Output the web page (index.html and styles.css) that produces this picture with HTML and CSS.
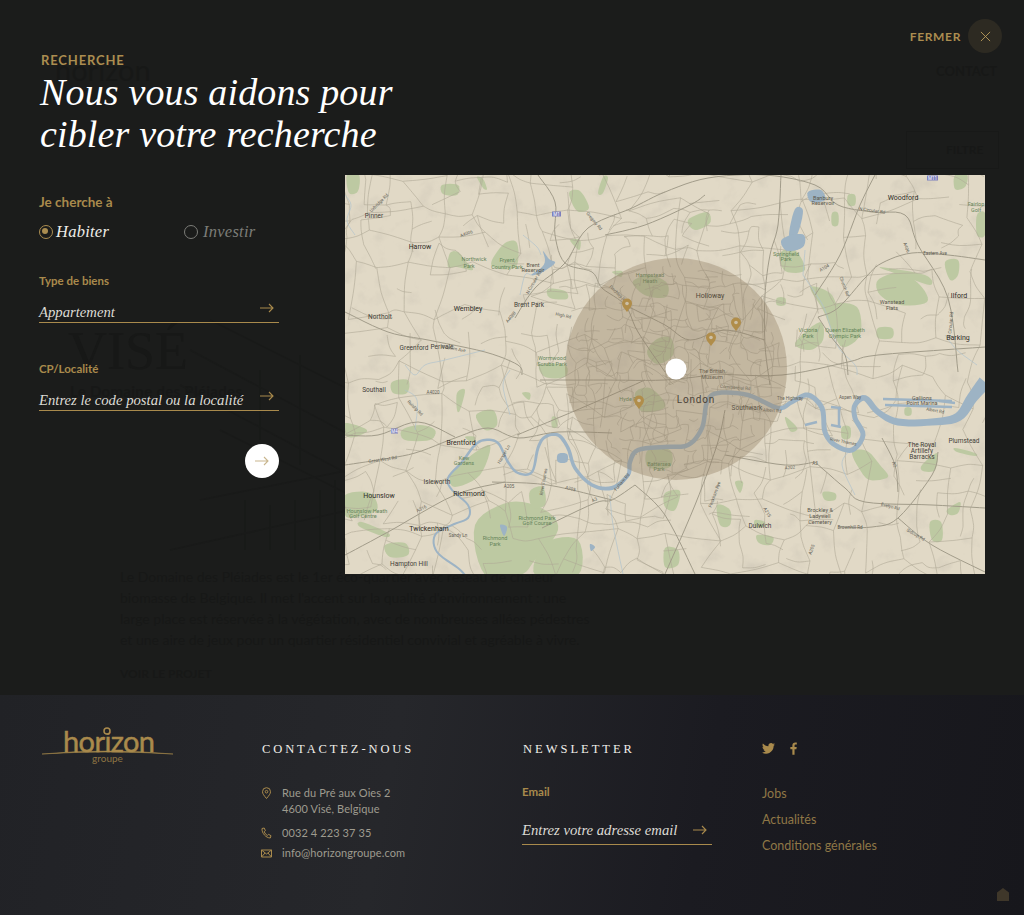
FILE: index.html
```html
<!DOCTYPE html>
<html lang="fr">
  <head>
    <meta charset="UTF-8" />
    <meta name="viewport" content="width=device-width, initial-scale=1.0" />
    <title>Recherche - Horizon Groupe</title>
    <link rel="stylesheet" href="styles.css">
  </head>
  <body>
    <main class="search">
      <!-- Page behind the overlay, barely visible -->
      <div class="behind" aria-hidden="true">
        <span class="ghost-logo">horizon</span>
        <span class="ghost-contact">CONTACT</span>
        <span class="ghost-filter">FILTRE</span>
        <span class="ghost-city">VISÉ</span>
        <span class="ghost-title">Le Domaine des Pléiades</span>
        <svg class="ghost-building" viewBox="0 0 200 250">
          <path d="M60 10l140 70M40 40l160 85M30 75l170 90M110 60v70M150 45v110M70 120l130 65M50 190l150 -30M20 240l180 -40M95 190v50M120 195v45M145 190v50M170 180v60M185 170v70"/>
        </svg>
        <p class="ghost-text">Le Domaine des Pléiades est le 1er éco-quartier avec réseau de chaleur<br>biomasse de Belgique. Il met l'accent sur la qualité d'environnement : une<br>large place est réservée à la végétation, avec de nombreuses allées pédestres<br>et une aire de jeux pour un quartier résidentiel convivial et agréable à vivre.</p>
        <span class="ghost-link">VOIR LE PROJET</span>
      </div>

      <a class="close" href="#">
        <span>FERMER</span>
        <span class="close-btn">
          <svg viewBox="0 0 12 12"><path d="M1 1l10 10M11 1L1 11"/></svg>
        </span>
      </a>

      <p class="kicker">RECHERCHE</p>
      <h1>Nous vous aidons pour<br>cibler votre recherche</h1>

      <div class="search-body">
        <form class="filters">
          <p class="label">Je cherche à</p>
          <div class="radios">
            <span class="radio radio-on">Habiter</span>
            <span class="radio">Investir</span>
          </div>

          <p class="label label-small label-type">Type de biens</p>
          <div class="field">
            <span>Appartement</span>
            <svg class="arrow" viewBox="0 0 14 10"><path d="M0 5h13M9 1l4 4-4 4"/></svg>
          </div>

          <p class="label label-small label-city">CP/Localité</p>
          <div class="field">
            <span>Entrez le code postal ou la localité</span>
            <svg class="arrow" viewBox="0 0 14 10"><path d="M0 5h13M9 1l4 4-4 4"/></svg>
          </div>

          <button class="go" type="button">
            <svg class="arrow" viewBox="0 0 14 10"><path d="M0 5h13M9 1l4 4-4 4"/></svg>
          </button>
        </form>

        <svg class="map" viewBox="0 0 640 399">
          <defs>
            <filter id="relief" x="0" y="0" width="100%" height="100%">
              <feTurbulence type="fractalNoise" baseFrequency="0.045" numOctaves="4" seed="11"/>
              <feColorMatrix values="0 0 0 0 0.55  0 0 0 0 0.51  0 0 0 0 0.43  2.6 0 0 0 -1.42"/>
            </filter>
          </defs>
          <rect width="640" height="399" fill="#e1d9c6"/>
          <rect width="640" height="399" filter="url(#relief)" opacity="0.4"/>
          <g id="parks"></g>
          <g id="minor-roads"></g>
          <g id="water"></g>
          <g id="major-roads"></g>

          <g class="place">
            <text x="29" y="43">Pinner</text>
            <text x="75" y="74" class="big">Harrow</text>
            <text x="123" y="136" class="big">Wembley</text>
            <text x="184" y="132">Brent Park</text>
            <text x="35" y="144">Northolt</text>
            <text x="69" y="175">Greenford</text>
            <text x="97" y="174">Perivale</text>
            <text x="365" y="123" class="big">Holloway</text>
            <text x="367" y="198" class="tiny">The British</text>
            <text x="367" y="204" class="tiny">Museum</text>
            <text x="402" y="235">Southwark</text>
            <text x="558" y="25" class="big">Woodford</text>
            <text x="614" y="123" class="big">Ilford</text>
            <text x="613" y="165" class="big">Barking</text>
            <text x="547" y="129" class="tiny">Wanstead</text>
            <text x="547" y="135" class="tiny">Flats</text>
            <text x="478" y="25" class="tiny">Banbury</text>
            <text x="478" y="30" class="tiny">Reservoir</text>
            <text x="188" y="92" class="tiny">Brent</text>
            <text x="188" y="97" class="tiny">Reservoir</text>
            <text x="29" y="217">Southall</text>
            <text x="116" y="270" class="big">Brentford</text>
            <text x="92" y="309">Isleworth</text>
            <text x="124" y="321" class="big">Richmond</text>
            <text x="34" y="323" class="big">Hounslow</text>
            <text x="84" y="356" class="big">Twickenham</text>
            <text x="64" y="391">Hampton Hill</text>
            <text x="577" y="272">The Royal</text>
            <text x="577" y="278">Artillery</text>
            <text x="577" y="284">Barracks</text>
            <text x="619" y="268">Plumstead</text>
            <text x="577" y="225" class="tiny">Gallions</text>
            <text x="577" y="230" class="tiny">Point Marina</text>
            <text x="475" y="337" class="tiny">Brockley &amp;</text>
            <text x="475" y="343" class="tiny">Ladywell</text>
            <text x="475" y="349" class="tiny">Cemetery</text>
            <text x="415" y="353">Dulwich</text>
            <text x="351" y="228" class="city">London</text>
          </g>
          <g class="place park-name">
            <text x="129" y="86">Northwick</text>
            <text x="124" y="93">Park</text>
            <text x="162" y="87">Fryent</text>
            <text x="162" y="94">Country Park</text>
            <text x="207" y="185">Wormwood</text>
            <text x="207" y="191">Scrubs Park</text>
            <text x="305" y="102">Hampstead</text>
            <text x="305" y="108">Heath</text>
            <text x="283" y="226">Hyde P</text>
            <text x="314" y="291">Battersea</text>
            <text x="314" y="296">Park</text>
            <text x="441" y="81">Springfield</text>
            <text x="441" y="86">Park</text>
            <text x="463" y="157">Victoria</text>
            <text x="463" y="163">Park</text>
            <text x="500" y="157">Queen Elizabeth</text>
            <text x="500" y="163">Olympic Park</text>
            <text x="119" y="285">Kew</text>
            <text x="119" y="290">Gardens</text>
            <text x="22" y="338">Hounslow Heath</text>
            <text x="18" y="343">Golf Centre</text>
            <text x="192" y="345">Richmond Park</text>
            <text x="192" y="350">Golf Course</text>
            <text x="150" y="365">Richmond</text>
            <text x="150" y="371">Park</text>
            <text x="631" y="31">Fairlop</text>
            <text x="631" y="37">Golf</text>
          </g>
          <g class="road-name">
            <rect x="207" y="36.500" width="9" height="5" fill="#7d80bd"/>
            <rect x="582" y="0.500" width="11" height="5" fill="#7d80bd"/>
            <rect x="46" y="253.500" width="7" height="5" fill="#7d80bd"/>
            <text x="211.500" y="40.500" class="shield">M1</text>
            <text x="587.500" y="4.500" class="shield">M11</text>
            <text x="49.500" y="257.500" class="shield">M4</text>
            <text x="35" y="29" transform="rotate(-45 35 29)">Uxbridge Rd</text>
            <text x="122" y="60" transform="rotate(-20 122 60)">A4006</text>
            <text x="248" y="47" transform="rotate(50 248 47)">Gregory Rd</text>
            <text x="190" y="108" transform="rotate(-60 190 108)">N Circular Rd</text>
            <text x="272" y="120" transform="rotate(45 272 120)">Finchley Rd</text>
            <text x="218" y="142" transform="rotate(12 218 142)">High Rd</text>
            <text x="108" y="175" transform="rotate(10 108 175)">Western Ave</text>
            <text x="167" y="143" transform="rotate(-50 167 143)">A4088</text>
            <text x="527" y="37" transform="rotate(8 527 37)">N Circular Rd</text>
            <text x="560" y="73" transform="rotate(70 560 73)">A406</text>
            <text x="590" y="80">Eastern Ave</text>
            <text x="480" y="94" transform="rotate(-30 480 94)">A104</text>
            <text x="498" y="112" transform="rotate(70 498 112)">Church Rd</text>
            <text x="607" y="150" transform="rotate(-85 607 150)">N Circular Rd</text>
            <text x="69" y="234" transform="rotate(45 69 234)">Ruislip Rd</text>
            <text x="88" y="219" >A4020</text>
            <text x="38" y="286" transform="rotate(-8 38 286)">Great West Rd</text>
            <text x="160" y="280" transform="rotate(-60 160 280)">Hanger Ln</text>
            <text x="200" y="307" transform="rotate(-80 200 307)">River Thames</text>
            <text x="164" y="313">A205</text>
            <text x="225" y="315" transform="rotate(15 225 315)">A205</text>
            <text x="77" y="335" transform="rotate(-25 77 335)">A316</text>
            <text x="113" y="362">Sandy Ln</text>
            <text x="250" y="326" transform="rotate(-25 250 326)">A3</text>
            <text x="278" y="308" transform="rotate(-50 278 308)">Fulham Rd</text>
            <text x="427" y="237" transform="rotate(5 427 237)">Albert Rd</text>
            <text x="390" y="214" transform="rotate(5 390 214)">Commercial Rd</text>
            <text x="445" y="225">The Highway</text>
            <text x="498" y="268" transform="rotate(12 498 268)">River Thames</text>
            <text x="505" y="224">Aspen Way</text>
            <text x="590" y="237" transform="rotate(10 590 237)">Albert Rd</text>
            <text x="545" y="333" transform="rotate(15 545 333)">Evelyn Rd</text>
            <text x="505" y="354">Brownhill Rd</text>
            <text x="570" y="361" transform="rotate(30 570 361)">Sidcup Rd</text>
            <text x="470" y="290">A3</text>
            <text x="445" y="294" transform="rotate(-5 445 294)">A202</text>
            <text x="548" y="290" transform="rotate(70 548 290)">A2</text>
            <text x="421" y="338" transform="rotate(60 421 338)">A215</text>
            <text x="371" y="320" transform="rotate(-70 371 320)">Peckham Rye</text>
            <text x="468" y="375" transform="rotate(-70 468 375)">A205</text>
          </g>

          <circle class="radius" cx="331" cy="194" r="111"/>

          <g class="pins">
            <path d="M282 137c-3-4-5-6-5-8.500a5 5 0 0 1 10 0c0 2.500-2 4.500-5 8.500z"/>
            <path d="M391 156c-3-4-5-6-5-8.500a5 5 0 0 1 10 0c0 2.500-2 4.500-5 8.500z"/>
            <path d="M366 171c-3-4-5-6-5-8.500a5 5 0 0 1 10 0c0 2.500-2 4.500-5 8.500z"/>
            <path d="M294 234c-3-4-5-6-5-8.500a5 5 0 0 1 10 0c0 2.500-2 4.500-5 8.500z"/>
          </g>
          <g class="pin-holes">
            <circle cx="282" cy="128.500" r="1.800"/>
            <circle cx="391" cy="147.500" r="1.800"/>
            <circle cx="366" cy="162.500" r="1.800"/>
            <circle cx="294" cy="225.500" r="1.800"/>
          </g>
          <circle cx="331" cy="194" r="10.500" fill="#fff"/>
        </svg>
      </div>
    </main>

    <footer class="footer">
      <div class="footer-logo">
        <svg class="logo" viewBox="0 -5 131 46">
          <text x="21" y="26" class="logo-word" textLength="92">horizon</text>
          <circle cx="65" cy="5" r="3" class="logo-ring"/>
          <path d="M0 28Q65 22 131 28Q65 24 0 28z" class="logo-arc"/>
          <text x="65.500" y="36" class="logo-sub">groupe</text>
        </svg>
      </div>

      <div class="footer-col">
        <h2>CONTACTEZ-NOUS</h2>
        <ul class="contact">
          <li class="contact-address">
            <svg viewBox="0 0 11 12"><path d="M5.500 11.500C3 8.500 1.500 6.800 1.500 4.700a4 4 0 0 1 8 0c0 2.100-1.500 3.800-4 6.800z"/><circle cx="5.500" cy="4.700" r="1.300"/></svg>
            <span>Rue du Pré aux Oies 2<br>4600 Visé, Belgique</span>
          </li>
          <li class="contact-phone">
            <svg viewBox="0 0 11 12"><path d="M1 1.500L3.200 1l1.200 2.700-1.200 1c.6 1.700 1.700 3 3.200 3.800L7.500 7.300 10 8.700l-.7 2.300C5 11 .6 6 1 1.500z"/></svg>
            <span>0032 4 223 37 35</span>
          </li>
          <li>
            <svg viewBox="0 0 11 12"><path d="M.5 3h10v7H.5zM.5 3l5 4 5-4M.5 10L4 6M10.500 10L7 6"/></svg>
            <span>info@horizongroupe.com</span>
          </li>
        </ul>
      </div>

      <div class="footer-col footer-news">
        <h2>NEWSLETTER</h2>
        <p class="label label-small label-email">Email</p>
        <div class="field field-email">
          <span>Entrez votre adresse email</span>
          <svg class="arrow" viewBox="0 0 14 10"><path d="M0 5h13M9 1l4 4-4 4"/></svg>
        </div>
      </div>

      <div class="footer-col">
        <div class="social">
          <svg class="twitter" viewBox="0 0 24 20"><path d="M24 2.400c-.9.400-1.800.7-2.800.800 1-.6 1.800-1.500 2.200-2.700-.9.500-2 .9-3.100 1.100C19.400.6 18.100 0 16.700 0c-2.700 0-4.900 2.200-4.900 4.900 0 .4 0 .8.100 1.100C7.800 5.800 4.200 3.900 1.700.9c-.4.700-.7 1.500-.7 2.500 0 1.700.9 3.200 2.200 4.100-.8 0-1.600-.2-2.200-.6v.1c0 2.400 1.700 4.400 3.900 4.800-.4.100-.8.200-1.300.2-.3 0-.6 0-.9-.1.600 2 2.400 3.400 4.600 3.400-1.700 1.300-3.800 2.100-6.100 2.100-.4 0-.8 0-1.200-.1C2.200 18.700 4.800 19.500 7.500 19.500c9.100 0 14-7.500 14-14v-.6c1-.7 1.800-1.600 2.500-2.500z"/></svg>
          <svg class="facebook" viewBox="0 0 8 14"><path d="M5.200 14V7.800h2.100l.4-2.500H5.200V3.700c0-.7.300-1.200 1.300-1.200h1.300V.2C7.500.1 6.800 0 6 0 4 0 2.700 1.200 2.700 3.400v1.900H.4v2.500h2.300V14z"/></svg>
        </div>
        <ul class="links">
          <li><a href="#">Jobs</a></li>
          <li><a href="#">Actualités</a></li>
          <li><a href="#">Conditions générales</a></li>
        </ul>
      </div>

      <svg class="home-mark" viewBox="0 0 12 13"><path d="M6 0l6 4.500V13H0V4.500z"/></svg>
    </footer>

    <script src="map.js"></script>
  </body>
</html>
```

FILE: styles.css
```css
* {
  box-sizing: border-box;
}
body {
  margin: 0;
  width: 1024px;
  height: 915px;
  overflow: hidden;
  background-color: #1b1c1b;
  font-family: Lato, "Open Sans", sans-serif;
}
p,
h1,
h2,
ul {
  margin: 0;
  padding: 0;
}
ul {
  list-style: none;
}
a {
  text-decoration: none;
  color: inherit;
}

/* search overlay */
.search {
  position: relative;
  height: 695px;
  padding: 52px 39px 0;
}
.kicker {
  position: relative;
  margin-left: 2px;
  font-size: 13px;
  line-height: 16px;
  font-weight: 700;
  letter-spacing: 0.85px;
  color: #ab8d50;
}
h1 {
  position: relative;
  margin: 3px 0 0 1px;
  font-family: "Liberation Serif", serif;
  font-style: italic;
  font-weight: 400;
  font-size: 38px;
  line-height: 42px;
  letter-spacing: 0.15px;
  color: #fff;
}
.close {
  position: absolute;
  top: 19px;
  right: 22px;
  display: flex;
  align-items: center;
  gap: 7px;
  font-size: 12px;
  font-weight: 700;
  letter-spacing: 0.65px;
  color: #ab8d50;
}
.close-btn {
  display: flex;
  align-items: center;
  justify-content: center;
  width: 34px;
  height: 34px;
  border-radius: 50%;
  background-color: #2d2a22;
}
.close-btn svg {
  width: 11px;
  height: 11px;
  fill: none;
  stroke: #b89a5a;
}
.search-body {
  position: relative;
  display: grid;
  grid-template-columns: 240px 640px;
  column-gap: 66px;
  margin-top: 20px;
}

/* left column */
.filters {
  display: flex;
  flex-direction: column;
}
.label {
  margin-top: 19px;
  font-size: 13.500px;
  line-height: 16px;
  font-weight: 700;
  color: #a98a4c;
}
.label-small {
  font-size: 11.500px;
  line-height: 14px;
}
.label-type {
  margin-top: 33px;
}
.label-city {
  margin-top: 39px;
}
.radios {
  display: grid;
  grid-template-columns: 145px 1fr;
  height: 20px;
  margin-top: 11px;
}
.radio {
  position: relative;
  padding-left: 19px;
  font-family: "Liberation Serif", serif;
  font-style: italic;
  font-size: 16.500px;
  line-height: 21px;
  letter-spacing: 0.25px;
  color: #7c7c78;
}
.radio::before {
  content: "";
  position: absolute;
  left: 0;
  top: 4px;
  width: 12px;
  height: 12px;
  border: 1px solid #7c7c78;
  border-radius: 50%;
}
.radio-on {
  padding-left: 17px;
  color: #efeee9;
}
.radio-on::before {
  border-color: #ab8d50;
}
.radio-on::after {
  content: "";
  position: absolute;
  left: 3px;
  top: 7px;
  width: 6px;
  height: 6px;
  border-radius: 50%;
  background-color: #ab8d50;
}
.field {
  display: flex;
  justify-content: space-between;
  padding-top: 14px;
  border-bottom: 1px solid #a98a4c;
  font-family: "Liberation Serif", serif;
  font-style: italic;
  font-size: 14.700px;
  line-height: 20px;
  color: #dddbd5;
}
.arrow {
  flex: none;
  width: 14px;
  height: 10px;
  margin: 0 5px 0 0;
  fill: none;
  stroke: #a98a4c;
  stroke-width: 1.100;
}
.field .arrow {
  margin-top: 1px;
}
.go {
  align-self: flex-end;
  display: flex;
  align-items: center;
  justify-content: center;
  width: 34px;
  height: 34px;
  margin-top: 33px;
  padding: 0;
  border: 0;
  border-radius: 50%;
  background-color: #fff;
}
.go .arrow {
  margin: 0;
  stroke: #c9b68e;
}

/* map */
.map {
  display: block;
  width: 640px;
  height: 399px;
}
.map text {
  font-family: Roboto, "Liberation Sans", sans-serif;
}
.place text {
  font-size: 6.500px;
  text-anchor: middle;
  fill: #45433b;
}
.place .big {
  font-size: 7px;
  fill: #2f2d27;
}
.place .tiny {
  font-size: 5.500px;
  fill: #5b574c;
}
.place .city {
  font-size: 10px;
  letter-spacing: 0.8px;
  fill: #26241f;
}
.park-name text {
  font-size: 5.500px;
  fill: #66855a;
}
.road-name text {
  font-size: 4.500px;
  text-anchor: middle;
  fill: #625f56;
}
.road-name .shield {
  font-size: 4.500px;
  fill: #fff;
}
.radius {
  fill: rgba(141, 121, 94, 0.36);
}
.pins path {
  fill: #b08d4a;
}
.pin-holes circle {
  fill: #ccbfa5;
}

/* ghost page under the overlay */
.behind {
  position: absolute;
  inset: 0;
  color: #171817;
}
.behind span,
.behind p,
.behind svg {
  position: absolute;
}
.ghost-logo {
  left: 55px;
  top: 52px;
  font-size: 29px;
}
.ghost-contact {
  left: 936px;
  top: 63px;
  font-size: 13px;
  font-weight: 700;
}
.ghost-filter {
  left: 906px;
  top: 131px;
  width: 93px;
  height: 38px;
  padding: 10px 0 0 39px;
  border: 1px solid #181918;
  font-size: 12px;
  font-weight: 700;
}
.ghost-city {
  left: 68px;
  top: 320px;
  font-family: "Liberation Serif", serif;
  font-size: 54px;
}
.ghost-title {
  left: 70px;
  top: 382px;
  font-size: 15px;
  font-weight: 700;
  letter-spacing: 0.3px;
}
.ghost-building {
  left: 150px;
  top: 310px;
  width: 200px;
  height: 250px;
  fill: none;
  stroke: #191a19;
  stroke-width: 1.500;
}
.ghost-text {
  left: 120px;
  top: 566px;
  font-size: 14px;
  line-height: 21px;
  white-space: nowrap;
}
.ghost-link {
  left: 120px;
  top: 666px;
  font-size: 12px;
  font-weight: 700;
}

/* footer */
.footer {
  position: relative;
  display: grid;
  grid-template-columns: 220px 260px 240px 1fr;
  height: 220px;
  padding: 31px 0 0 42px;
  background: linear-gradient(100deg, #212226 0%, #26272b 38%, #1b1b21 68%, #17171c 100%);
}
.logo {
  display: block;
  width: 131px;
  height: 46px;
  margin-top: -5px;
}
.logo-word {
  font-family: Lato, sans-serif;
  font-size: 29px;
  fill: #a98a4c;
  stroke: #a98a4c;
  stroke-width: 0.5;
}
.logo-ring {
  fill: #222327;
  stroke: #a98a4c;
  stroke-width: 1.500;
}
.logo-arc {
  fill: #a98a4c;
  stroke: #a98a4c;
  stroke-width: 0.5;
}
.logo-sub {
  font-family: Lato, sans-serif;
  font-size: 10px;
  text-anchor: middle;
  fill: #8d7443;
}
.footer-col {
  padding-top: 15px;
}
.footer-news .label {
  margin-top: 28px;
}
h2 {
  font-family: "Liberation Serif", serif;
  font-weight: 400;
  font-size: 12.500px;
  line-height: 16px;
  letter-spacing: 2.900px;
  color: #f1efea;
}
.footer-news h2 {
  margin-left: 1px;
  letter-spacing: 3px;
}
.contact {
  margin-top: 28px;
  font-size: 11px;
  line-height: 16px;
  letter-spacing: 0.1px;
  color: #9e9b8f;
}
.contact li {
  display: flex;
  gap: 10px;
  align-items: flex-start;
}
.contact svg {
  flex: none;
  width: 11px;
  height: 12px;
  margin: 2px 0 0 -1px;
  fill: none;
  stroke: #a98a4c;
  stroke-width: 1;
}
.contact-address {
  margin-bottom: 8px;
}
.contact-phone {
  margin-bottom: 4px;
}
.field-email {
  width: 190px;
  padding: 21px 0 4px;
}
.field-email .arrow {
  margin-top: 5px;
}
.social {
  display: flex;
  align-items: center;
  gap: 15px;
  height: 14px;
  margin-bottom: 31px;
}
.social svg {
  fill: #a98a4c;
}
.twitter {
  width: 13px;
  height: 11px;
}
.facebook {
  width: 7px;
  height: 13px;
}
.links {
  display: flex;
  flex-direction: column;
  gap: 10px;
  font-size: 12.500px;
  line-height: 16px;
  color: #8f7746;
}
.home-mark {
  position: absolute;
  right: 15px;
  bottom: 14px;
  width: 12px;
  height: 13px;
  fill: #3f372a;
}
```

FILE: map.js
```js
// Draws the roads, parks and river of the map from point lists
const NS = "http://www.w3.org/2000/svg";

function add(groupId, tag, attrs) {
  const el = document.createElementNS(NS, tag);
  for (const key in attrs) el.setAttribute(key, attrs[key]);
  document.getElementById(groupId).appendChild(el);
}

// catmull-rom through the points, returned as many small steps
function sample(points, closed) {
  const out = [];
  const n = points.length;
  const at = (i) =>
    closed ? points[(i + n) % n] : points[Math.max(0, Math.min(n - 1, i))];
  const last = closed ? n : n - 1;
  for (let i = 0; i < last; i++) {
    const [p0, p1, p2, p3] = [at(i - 1), at(i), at(i + 1), at(i + 2)];
    for (let s = 0; s < 6; s++) {
      const t = s / 6;
      const pt = p1.map((_, k) =>
        0.5 *
        (2 * p1[k] +
          (p2[k] - p0[k]) * t +
          (2 * p0[k] - 5 * p1[k] + 4 * p2[k] - p3[k]) * t * t +
          (3 * p1[k] - p0[k] - 3 * p2[k] + p3[k]) * t * t * t)
      );
      out.push(pt);
    }
  }
  if (!closed) out.push(points[n - 1]);
  return out;
}

function toPath(pts, closed) {
  return (
    "M" + pts.map((p) => p[0].toFixed(1) + " " + p[1].toFixed(1)).join("L") +
    (closed ? "Z" : "")
  );
}

// river with a width that changes along its length: [x, y, width]
function ribbon(points) {
  const pts = sample(points, false);
  const left = [];
  const right = [];
  pts.forEach((p, i) => {
    const a = pts[Math.max(0, i - 1)];
    const b = pts[Math.min(pts.length - 1, i + 1)];
    const len = Math.hypot(b[0] - a[0], b[1] - a[1]) || 1;
    const nx = -(b[1] - a[1]) / len;
    const ny = (b[0] - a[0]) / len;
    left.push([p[0] + (nx * p[2]) / 2, p[1] + (ny * p[2]) / 2]);
    right.push([p[0] - (nx * p[2]) / 2, p[1] - (ny * p[2]) / 2]);
  });
  return toPath(left.concat(right.reverse()), true);
}

const parks = [
  [[2,0],[14,0],[13,16],[4,18]], [[97,10],[113,10],[112,20],[98,19]], [[132,2],[138,4],[142,14],[138,13]],
  [[224,18],[235,16],[244,33],[232,36]], [[258,2],[263,3],[258,18],[253,18]],
  [[147,85],[160,68],[172,68],[171,92],[150,93]], [[105,78],[113,77],[120,85],[128,95],[112,92],[103,92]],
  [[203,114],[220,116],[222,124],[205,123]], [[225,65],[235,65],[234,75]], [[267,97],[277,96],[276,102]],
  [[289,105],[305,100],[322,108],[321,122],[302,121],[290,112]],
  [[302,177],[312,164],[326,163],[328,180],[312,189]], [[290,218],[305,213],[320,228],[315,235],[296,236]],
  [[303,275],[325,275],[325,292],[303,292]], [[195,190],[220,190],[220,202],[200,202]],
  [[435,78],[450,75],[460,95],[440,96]], [[465,112],[485,118],[495,135],[515,150],[510,165],[490,160],[478,135]],
  [[450,168],[475,147],[478,165],[465,175]], [[487,130],[512,132],[515,160],[497,172],[487,150]],
  [[533,105],[555,98],[575,110],[582,127],[555,130],[535,120]], [[535,92],[580,100],[585,110],[555,100]],
  [[600,87],[613,85],[613,100],[605,105]], [[632,40],[640,38],[640,60],[632,60]],
  [[487,38],[493,38],[493,50],[487,50]], [[503,20],[510,20],[510,30],[503,30]],
  [[343,45],[362,37],[365,48],[350,55]], [[610,0],[622,0],[620,12],[610,14]], [[533,153],[547,153],[547,163],[533,163]],
  [[432,123],[440,123],[440,130],[432,130]], [[47,207],[63,205],[62,218],[48,218]],
  [[0,248],[22,255],[10,262],[0,260]], [[57,255],[75,250],[90,255],[85,265],[60,265]],
  [[105,300],[120,285],[145,270],[135,300],[110,312]], [[131,240],[148,235],[152,250],[140,255]],
  [[112,218],[120,215],[115,235],[112,235]], [[130,350],[165,327],[200,335],[213,355],[190,385],[175,400],[140,400]],
  [[190,400],[200,368],[233,365],[233,400]], [[0,320],[25,318],[32,335],[10,342],[0,340]],
  [[40,370],[60,368],[63,380],[45,382]], [[17,347],[43,358],[40,362],[15,352]],
  [[185,316],[198,312],[200,330],[187,332]], [[207,242],[212,243],[212,252],[207,252]], [[177,218],[185,218],[184,225]],
  [[507,277],[522,276],[535,290],[543,302],[525,305],[515,295]], [[577,290],[592,278],[590,295],[578,296]],
  [[585,347],[596,347],[597,365],[587,365]], [[372,330],[385,335],[385,350],[375,350]],
  [[440,242],[450,250],[452,255],[445,256]], [[497,252],[505,252],[505,263],[497,263]],
  [[478,317],[490,318],[490,325],[480,325]], [[610,273],[630,278],[630,281],[612,277]],
  [[320,318],[335,316],[330,335],[320,332]], [[320,373],[333,375],[333,390],[320,392]],
  [[390,307],[398,307],[395,318]], [[602,335],[615,327],[613,338],[605,340]],
  [[410,345],[420,347],[418,352],[410,352]], [[412,360],[428,362],[425,370],[414,368]],
  [[560,233],[566,233],[566,240],[560,240]], [[120,262],[130,262],[128,268]]
];

const lakes = [
  [[463,17],[476,15],[480,25],[466,27]], [[450,34],[458,36],[452,60],[444,60]],
  [[436,66],[446,60],[459,60],[458,72],[442,76]], [[198,76],[204,84],[210,88],[196,98],[186,100],[197,92],[200,85]],
  [[155,350],[162,352],[159,361]], [[245,369],[250,372],[246,376]],
  [[213,279],[222,279],[222,287],[213,287]]
];

const thames = [
  [640,207,14],[627,223,11],[613,242,9],[587,247,7],[553,247,7],[533,237,6],[520,223,6],[510,230,5],[510,243,5],
  [518,260,5],[507,275,5],[490,270,5],[480,257,5],[477,233,5],[463,220,5],[447,227,4.500],[433,233,4.500],[403,220,4.500],
  [373,218,4.500],[362,227,4.500],[357,253,4.500],[343,270,4.500],[320,272,4.500],[293,275,4.500],[285,287,4.500],[283,300,4],[267,313,4],
  [247,310,3.500],[230,293,3.500],[223,273,3.500],[213,260,3.500],[200,262,3],[193,273,3],[187,297,2.500],[173,298,2.500],[163,287,2.500],
  [153,268,2.500],[140,265,2.500],[130,270,2.500],[117,287,2.500],[103,303,2],[107,315,2],[123,330,2],[123,343,2],
  [107,350,2],[90,360,2],[92,377,2],[113,393,2],[120,400,2]
];

const docks = [
  [[538,224],[607,226]], [[540,230],[607,232]], [[594,226],[610,228]], [[460,250],[472,247]],
  [[486,250],[496,252]], [[494,232],[494,252]], [[486,232],[496,233]]
];

const brooks = [
  [[0,20],[6,30],[2,46],[10,60]], [[178,60],[192,72],[196,80]], [[175,120],[180,100],[186,100]],
  [[60,190],[70,200],[80,190],[100,185],[140,175]], [[458,100],[470,118],[480,135],[492,170],[510,190],[512,200]],
  [[460,75],[458,100]], [[70,255],[72,225],[60,215]], [[165,195],[158,210],[165,240]],
  [[600,160],[612,175],[632,190]], [[505,275],[497,290],[510,320]], [[265,320],[268,350],[278,399]]
];

const major = [
  [[0,137],[43,157],[83,165],[140,177],[173,190],[177,200]],
  [[193,0],[210,27],[210,60],[220,88],[247,97],[257,113],[280,130],[293,157],[320,197]],
  [[170,143],[190,113],[220,88],[243,53],[287,33],[320,17],[363,3],[420,0],[470,10],[493,30],[527,37],[560,40],[573,70],[603,123],[613,197]],
  [[473,142],[493,133],[520,103],[537,88],[567,78],[603,80],[640,85]],
  [[473,142],[487,163],[500,180],[503,200]],
  [[0,290],[33,285],[70,278],[110,263],[143,253],[173,263],[213,257],[267,258]],
  [[0,260],[33,260],[73,247],[110,262]],
  [[197,353],[250,328],[267,325],[290,310]],
  [[147,307],[203,310],[267,325]],
  [[0,380],[43,357],[110,320],[160,307]],
  [[493,352],[527,352],[553,343],[587,300],[593,277]],
  [[553,343],[587,370],[640,397]],
  [[470,287],[500,313],[520,327],[587,330],[640,333]],
  [[537,263],[550,290],[553,317]],
  [[373,199],[437,200],[503,187],[533,180],[640,172]],
  [[195,205],[260,205],[320,205],[373,199]],
  [[172,260],[220,240],[262,222],[300,205]],
  [[280,130],[320,150],[345,165],[380,155],[420,165]],
  [[530,0],[515,30],[495,80],[470,120]],
  [[436,0],[433,50],[425,80],[420,120],[420,170],[425,210]],
  [[320,399],[350,330],[372,270],[380,235]],
  [[290,310],[320,340],[350,399]],
  [[380,280],[440,290],[470,287]],
  [[260,60],[300,50],[345,30],[360,20]]
];

const minor = [];
let seed = 41;
function rnd() {
  seed = (seed * 16807) % 2147483647;
  return seed / 2147483647;
}

// loose road mesh for the whole sheet
function mesh(step, jitter, chance, keep) {
  const nodes = {};
  for (let i = -1; i * step < 660; i++) {
    for (let j = -1; j * step < 420; j++) {
      nodes[i + "," + j] = [
        i * step + (rnd() - 0.5) * jitter * 2,
        j * step + (rnd() - 0.5) * jitter * 2
      ];
    }
  }
  for (const key in nodes) {
    const [i, j] = key.split(",").map(Number);
    const here = nodes[key];
    [nodes[i + 1 + "," + j], nodes[i + "," + (j + 1)]].forEach((next) => {
      if (next && rnd() < chance && keep(here) && keep(next)) minor.push([here, next]);
    });
  }
}

const fromCentre = (p) => Math.hypot(p[0] - 331, p[1] - 194);
mesh(33, 13, 0.75, () => true);
mesh(23, 8, 0.3, () => true);
mesh(19, 6, 0.5, (p) => fromCentre(p) < 170);
mesh(11, 3.5, 0.5, (p) => fromCentre(p) < 105);

parks.forEach((p) => add("parks", "path", { d: toPath(sample(p, true), true), fill: "#bdc9a2" }));
minor.forEach((r) => {
  const mid = [(r[0][0] + r[1][0]) / 2 + (rnd() - 0.5) * 5, (r[0][1] + r[1][1]) / 2 + (rnd() - 0.5) * 5];
  add("minor-roads", "path", {
    d: toPath(sample([r[0], mid, r[1]], false), false),
    fill: "none",
    stroke: "#aea896",
    "stroke-width": 0.6
  });
});
brooks.forEach((b) =>
  add("water", "path", { d: toPath(sample(b, false), false), fill: "none", stroke: "#b0c3cd", "stroke-width": 0.7 })
);
lakes.forEach((p) => add("water", "path", { d: toPath(sample(p, true), true), fill: "#9db3c4" }));
docks.forEach((d) =>
  add("water", "path", { d: toPath(d, false), fill: "none", stroke: "#9db3c4", "stroke-width": 2.5 })
);
add("water", "path", { d: ribbon(thames), fill: "#9db3c4" });
major.forEach((r) =>
  add("major-roads", "path", {
    d: toPath(sample(r, false), false),
    fill: "none",
    stroke: "#a29c8a",
    "stroke-width": 1
  })
);
```
